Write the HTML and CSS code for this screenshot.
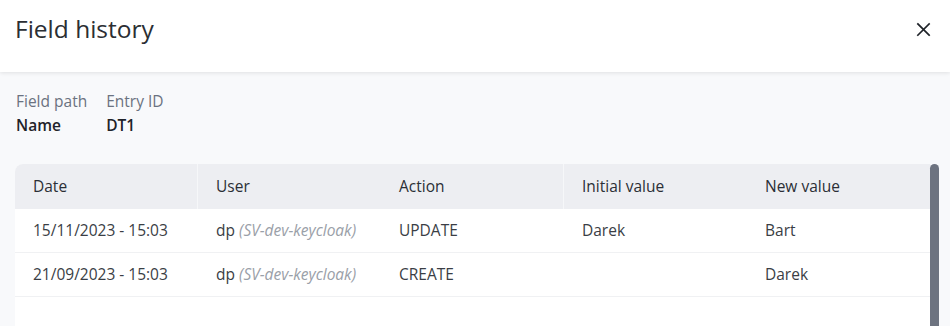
FILE: index.html
```html
<!DOCTYPE html>
<html>
<head>
<meta charset="utf-8">
<link rel="stylesheet" href="styles.css">
</head>
<body>
<div class="dialog">
  <header class="head">
    <h1 class="title">Field history</h1>
    <button class="close" aria-label="Close">
      <svg width="16" height="16" viewBox="0 0 16 16"><path d="M2 2L14 14M14 2L2 14" stroke="#1f2329" stroke-width="1.8" stroke-linecap="square" fill="none"/></svg>
    </button>
  </header>
  <main class="body">
    <div class="meta">
      <div class="meta-item"><span class="meta-label">Field path</span><span class="meta-value">Name</span></div>
      <div class="meta-item"><span class="meta-label">Entry ID</span><span class="meta-value">DT1</span></div>
    </div>
    <div class="table-wrap">
      <div class="table">
        <div class="row head-row">
          <div class="cell sep">Date</div>
          <div class="cell">User</div>
          <div class="cell sep">Action</div>
          <div class="cell">Initial value</div>
          <div class="cell">New value</div>
        </div>
        <div class="row">
          <div class="cell">15/11/2023 - 15:03</div>
          <div class="cell"><span>dp <em class="realm">(SV-dev-keycloak)</em></span></div>
          <div class="cell">UPDATE</div>
          <div class="cell">Darek</div>
          <div class="cell">Bart</div>
        </div>
        <div class="row">
          <div class="cell">21/09/2023 - 15:03</div>
          <div class="cell"><span>dp <em class="realm">(SV-dev-keycloak)</em></span></div>
          <div class="cell">CREATE</div>
          <div class="cell"></div>
          <div class="cell">Darek</div>
        </div>
        <div class="row empty"></div>
      </div>
      <div class="scrollbar"></div>
    </div>
  </main>
</div>
</body>
</html>
```
FILE: styles.css
```css
* { box-sizing: border-box; }
html, body { margin: 0; padding: 0; }
body {
  font-family: "Open Sans", "Noto Sans", sans-serif;
  background: #f8f9fb;
  color: #2b2f36;
  width: 950px;
  height: 326px;
  overflow: hidden;
}
.dialog { display: flex; flex-direction: column; height: 326px; }
.head {
  height: 72px;
  background: #ffffff;
  display: flex;
  align-items: center;
  justify-content: space-between;
  padding: 0 19px 16px 15px;
  box-shadow: 0 1px 4px rgba(0,0,0,0.10);
  position: relative;
  z-index: 1;
  flex: none;
}
.title {
  margin: 0;
  font-size: 24.5px;
  font-weight: 400;
  color: #2b2e33;
}
.close {
  border: 0;
  background: transparent;
  padding: 0;
  width: 15px;
  height: 15px;
  display: flex;
  margin-top: 2px;
}
.close svg { width: 15px; height: 15px; }
.body { padding: 19px 0 0 15px; flex: 1; }
.meta { display: flex; gap: 19px; padding-left: 1px; }
.meta-item { display: flex; flex-direction: column; }
.meta-label { font-size: 15.5px; line-height: 21px; color: #6b7280; }
.meta-value { font-size: 15.5px; line-height: 26px; font-weight: 600; color: #1f2329; }
.table-wrap { margin-top: 26px; display: flex; }
.table {
  width: 915px;
  background: #ffffff;
  border-top-left-radius: 8px;
  overflow: hidden;
}
.row {
  display: grid;
  grid-template-columns: 183px 183px 183px 183px 183px;
  height: 44px;
  border-bottom: 1px solid #f0f1f3;
  font-size: 15.5px;
  color: #3a3e45;
}
.row.empty { border-bottom: 0; }
.head-row {
  background: #edeef2;
  height: 45px;
  border-bottom: 0;
  color: #2b2f36;
}
.cell {
  padding-left: 18px;
  padding-bottom: 2px;
  display: flex;
  align-items: center;
  white-space: nowrap;
}
.head-row .cell.sep { border-right: 1px solid #f6f7f9; }
.realm { color: #9aa0a8; font-style: italic; }
.scrollbar {
  width: 9px;
  height: 170px;
  background: #6d7380;
  border-radius: 5px 5px 0 0;
}
```
